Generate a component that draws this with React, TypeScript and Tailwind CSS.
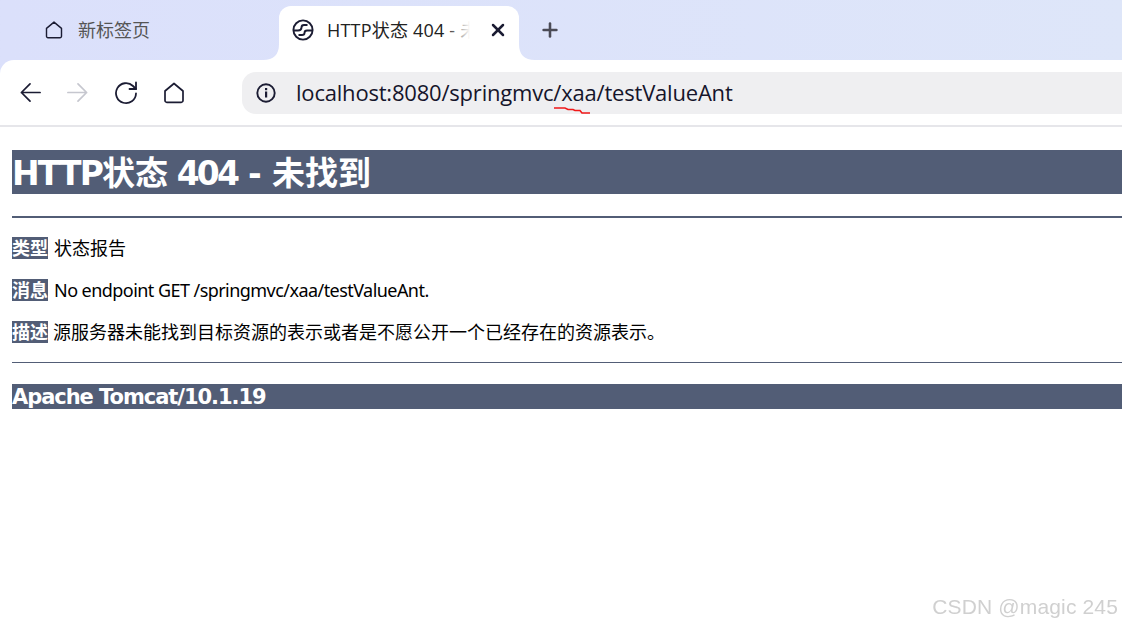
import { X, Plus } from "lucide-react";

const uiFont = "[font-family:'Open_Sans','Noto_Sans_CJK_SC',sans-serif]";

function HomeIcon({ className }: { className?: string }) {
  return (
    <svg viewBox="0 0 24 24" fill="none" stroke="currentColor" strokeWidth="1.7" strokeLinejoin="round" className={className}>
      <path d="M12 2.5 L21 10 V19.5 A1.8 1.8 0 0 1 19.2 21.3 H4.8 A1.8 1.8 0 0 1 3 19.5 V10 Z" />
    </svg>
  );
}

function SiteIcon() {
  return (
    <svg viewBox="0 0 22 22" fill="none" stroke="#1b1c33" strokeWidth="1.9" className="h-[22px] w-[22px]">
      <circle cx="11" cy="11" r="9.6" />
      <path d="M1.5 11.5 H6 Q9.5 11.5 9.5 8.5 Q9.5 6 12 6 H15.5" />
      <path d="M6.5 16 H10 Q12.5 16 12.5 14 Q12.5 11.5 15 11.5 H20.5" />
    </svg>
  );
}

function Arrow({ flip, className }: { flip?: boolean; className?: string }) {
  return (
    <svg viewBox="0 0 24 24" fill="none" stroke="currentColor" strokeWidth="1.8" strokeLinecap="round" strokeLinejoin="round" className={className}>
      <g transform={flip ? "matrix(-1 0 0 1 24 0)" : undefined}>
        <path d="M22 12 H2.5 M11.5 3 L2.5 12 L11.5 21" />
      </g>
    </svg>
  );
}

function ReloadIcon() {
  return (
    <svg viewBox="0 0 24 24" fill="none" stroke="#1b1c33" strokeWidth="1.8" strokeLinecap="round" strokeLinejoin="round" className="h-6 w-6">
      <path d="M22 12.5 A10 10 0 1 1 19 5 L22 8" />
      <path d="M22 1.5 V8 H15.5" />
    </svg>
  );
}

function InfoIcon() {
  return (
    <svg viewBox="0 0 20 20" fill="none" className="h-5 w-5">
      <circle cx="10" cy="10" r="8.7" stroke="#1b1c33" strokeWidth="1.9" />
      <rect x="9" y="8.5" width="2.2" height="6" fill="#1b1c33" />
      <rect x="9" y="5" width="2.2" height="2.2" fill="#1b1c33" />
    </svg>
  );
}

function Label({ children }: { children: string }) {
  return <b className="mr-[5px] inline-block h-[22px] bg-[#525d76] font-bold leading-[22px] text-white">{children}</b>;
}

export default function App() {
  return (
    <div className="relative h-[627px] w-[1122px] overflow-hidden bg-gradient-to-r from-[#dbe0fb] to-[#dee6f9]">
      {/* tab strip */}
      <div className={`flex h-[60px] items-end ${uiFont}`}>
        <div className="flex h-[60px] w-[279px] items-center pl-[44px] text-[18px] text-[#555]">
          <HomeIcon className="h-[20px] w-[20px] text-[#1b1c33]" />
          <span className="ml-[14px]">新标签页</span>
        </div>
        <div className="relative flex h-[54px] w-[240px] items-center rounded-t-[12px] bg-white pb-[6px] pl-[13px] pr-[11px]">
          <svg viewBox="0 0 16 16" className="absolute bottom-0 left-[-16px] h-4 w-4">
            <path d="M16 0 V16 H0 Q16 16 16 0 Z" fill="#fff" />
          </svg>
          <svg viewBox="0 0 16 16" className="absolute bottom-0 right-[-16px] h-4 w-4">
            <path d="M0 0 V16 H16 Q0 16 0 0 Z" fill="#fff" />
          </svg>
          <SiteIcon />
          <div className="relative ml-[13px] w-[143px] overflow-hidden whitespace-nowrap text-[18px] tracking-[0.2px] text-[#222]">
            HTTP状态 404 - 未找到
            <div className="absolute inset-y-0 right-0 w-[24px] bg-gradient-to-r from-transparent to-white" />
          </div>
          <X size={20} strokeWidth={3} className="ml-auto text-[#1b1c33]" />
        </div>
        <div className="flex h-[60px] items-center pl-[20px]">
          <Plus size={22} strokeWidth={2.8} className="text-[#4a4a55]" />
        </div>
      </div>

      {/* toolbar */}
      <div className={`flex h-[67px] items-center rounded-tl-[14px] border-b-2 border-[#e6e6ea] bg-white ${uiFont}`}>
        <div className="flex w-[242px] items-center pl-[19px]">
          <Arrow className="h-[23px] w-[23px] text-[#1b1c33]" />
          <Arrow flip className="ml-[24px] h-[23px] w-[23px] text-[#c6c7cf]" />
          <div className="ml-[25px]"><ReloadIcon /></div>
          <HomeIcon className="ml-[24px] h-6 w-6 text-[#1b1c33]" />
        </div>
        <div className="flex h-[42px] flex-1 items-center rounded-l-[14px] bg-[#efeff1] pl-[14px]">
          <InfoIcon />
          <span className="ml-[20px] text-[22px] tracking-[-0.2px] text-[#15152b]">localhost:8080/springmvc/xaa/testValueAnt</span>
        </div>
      </div>

      {/* page */}
      <div className="h-[500px] bg-white pl-3 pt-[23px] [font-family:Tahoma,'Noto_Sans','Noto_Sans_CJK_SC',sans-serif] text-black">
        <h1 className="h-[44px] bg-[#525d76] [font-family:Tahoma,'DejaVu_Sans','Noto_Sans_CJK_SC',sans-serif] text-[33px] font-bold leading-[48px] text-white">
          <span className="tracking-[-1.9px]">HTTP</span>状态<span className="tracking-[-2.8px]"> 404</span><span className="tracking-[-0.6px]"> - </span>未找到
        </h1>
        <hr className="mt-[22px] h-[2px] border-0 bg-[#525d76]" />
        <p className="mt-[19px] text-[18px] leading-[22px]"><Label>类型</Label><span className="ml-px">状态报告</span></p>
        <p className="mt-[20px] text-[18px] leading-[22px]"><Label>消息</Label><span className="ml-px tracking-[-0.55px]">No endpoint GET /springmvc/xaa/testValueAnt.</span></p>
        <p className="mt-[20px] text-[18px] leading-[22px]"><Label>描述</Label>源服务器未能找到目标资源的表示或者是不愿公开一个已经存在的资源表示。</p>
        <hr className="mt-[19px] h-px border-0 bg-[#525d76]" />
        <h3 className="mt-[21px] h-[25px] bg-[#525d76] [font-family:Tahoma,'DejaVu_Sans',sans-serif] text-[21px] font-bold leading-[27px] tracking-[-1.05px] text-white">Apache Tomcat/10.1.19</h3>
      </div>

      {/* red squiggle drawn over the address */}
      <svg viewBox="0 0 38 8" className="absolute left-[553px] top-[107px] h-2 w-[38px]" fill="none" stroke="#f01818" strokeWidth="1.6">
        <path d="M1 1 H12 L15 2.5 H20 L22 3.5 H27 L29 6 H37" />
      </svg>

      {/* watermark */}
      <div className="absolute bottom-[5px] right-[4px] [font-family:'Liberation_Sans',sans-serif] text-[21px] tracking-[0.15px] text-[#d0d0d0] blur-[0.4px]">CSDN @magic 245</div>
    </div>
  );
}
